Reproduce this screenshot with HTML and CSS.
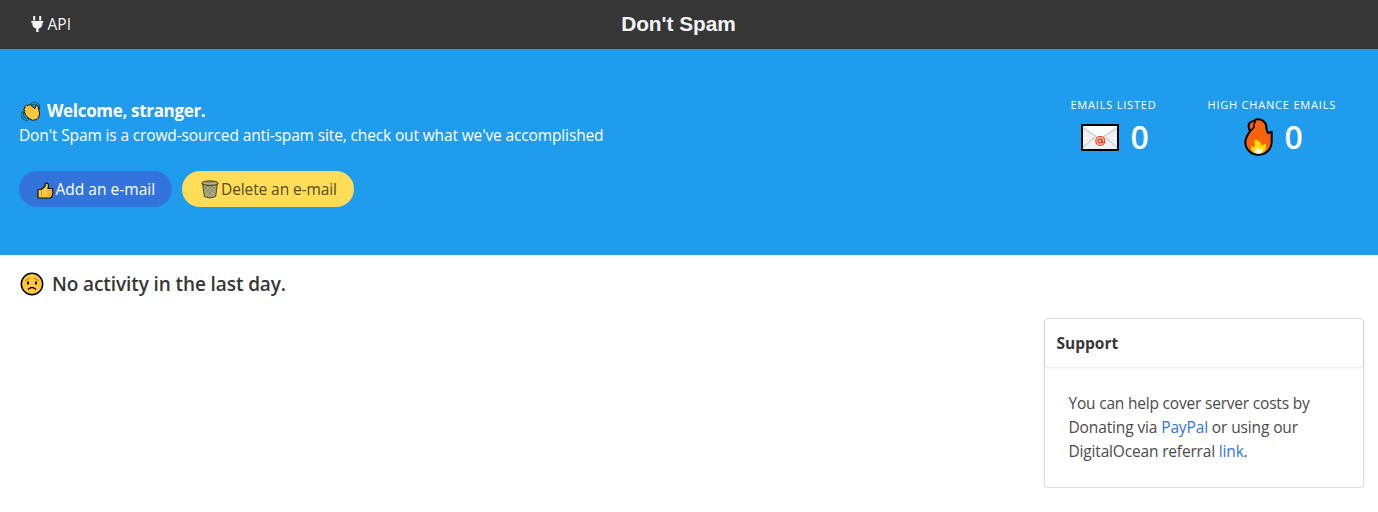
FILE: index.html
```html
<!DOCTYPE html>
<html lang="en">
<head>
<meta charset="utf-8">
<title>Don't Spam</title>
<link rel="stylesheet" href="styles.css">
</head>
<body>
  <nav class="navbar">
    <a class="navbar-item">
      <svg class="icon-plug" viewBox="0 0 13 16" fill="currentColor"><path d="M2.200 0h2v4.400h-2zM8.200 0h2v4.400h-2zM.3 5h12v1.700h-.9v1.600c0 2.200-1.500 3.700-3.800 4.200V16H5.200v-3.500C2.900 12 1.400 10.500 1.400 8.300V6.700H.3z"/></svg>
      <span class="api">API</span>
    </a>
    <h1 class="brand"><span>Don't Spam</span></h1>
  </nav>

  <section class="hero">
    <div class="intro">
      <h2 class="title">
        <svg class="icon-wave" viewBox="0 0 22 22" stroke-linejoin="round" stroke-linecap="round">
          <path d="M12 3Q13 .8 16 2.200Q20 3 19.500 7M2 12.500Q.8 15 2.500 17.500Q4 20 7.500 19.500" fill="none" stroke="#0b2a33" stroke-width="3"/>
          <path d="M12 3Q13 .8 16 2.200Q20 3 19.500 7M2 12.500Q.8 15 2.500 17.500Q4 20 7.500 19.500" fill="none" stroke="#26a7c6" stroke-width="1.500"/>
          <path d="M3 8.500L4.500 7.300L4 5.500L6 4.200L7.500 5L8.600 3.300L10.400 3.900L15.300 8L16.300 4.500L18.600 4.600L20.500 13.500Q20.500 18 16.500 20Q12.500 22 9 18.800L4.600 14.500L4.700 12.800L3.200 11.500L4 10Z" fill="#ffc83d" stroke="#111" stroke-width="1.100"/>
          <path d="M6.500 6.500L11 11M5 9.500L9.500 13.500M9 5L13 9.500" fill="none" stroke="#d69a2d" stroke-width=".6"/>
        </svg>
        <span class="title-text">Welcome, stranger.</span>
      </h2>
      <p class="subtitle"><span>Don't Spam is a crowd-sourced anti-spam site, check out what we've accomplished</span></p>
      <div class="buttons">
        <a class="button is-link">
          <svg class="icon-thumb" viewBox="0 0 17 17" stroke-linejoin="round">
            <path d="M1 7.500H4.300L8 4.200L8.300 1.600Q9.500 .4 11 1.800Q12 3.500 10.900 6.500H15Q16.200 7.200 15.700 8.500L16 10.500L15.500 12.600L14.700 15L13.500 16H1Z" fill="#ffc83d" stroke="#111" stroke-width="1.200"/>
            <path d="M10.500 8.700H15M10.500 11.200H15M10.500 13.600H14.500M4.500 8V15" stroke="#d18d1d" stroke-width=".8"/>
          </svg>
          <span class="add">Add an e-mail</span>
        </a>
        <a class="button is-warning">
          <svg class="icon-bin" viewBox="0 0 18 19">
            <path d="M1.500 3L3.400 16.500Q9 19.500 14.600 16.500L16.500 3Z" fill="#a9a984" stroke="#47431e" stroke-width="1"/>
            <path d="M3 6L12 17M6 5L15 14M10 5L15.500 10M15 6L6 17M12 5L3.500 14M8 5L3 10" stroke="#7d7b58" stroke-width=".6"/>
            <ellipse cx="9" cy="3.200" rx="8.200" ry="2.300" fill="#908f6d" stroke="#47431e"/>
            <path d="M2.500 3Q9 5 15.500 3" fill="none" stroke="#c4c49c" stroke-width=".9"/>
          </svg>
          <span class="delete">Delete an e-mail</span>
        </a>
      </div>
    </div>
    <div class="stats">
      <div class="stat">
        <p class="heading"><span class="listed">Emails listed</span></p>
        <p class="value">
          <svg class="icon-mail" viewBox="0 0 38 27">
            <path d="M1 1H37V26H1Z" fill="#f1f1f1" stroke="#000" stroke-width="2"/>
            <path d="M2 2L19 14.500L36 2Z" fill="#fff"/>
            <path d="M2 4L19 15L36 4M2 23.500L14 13M36 23.500L24 13" fill="none" stroke="#ccc" stroke-width="1.200"/>
            <circle cx="19.300" cy="17" r="4.500" fill="#f5cfc4" stroke="#f03a17" stroke-width="1.200"/>
            <circle cx="19" cy="17" r="1.900" fill="none" stroke="#f03a17" stroke-width="1.200"/>
            <path d="M21 14.800V17.500Q21.500 19.300 23.500 17.800" fill="none" stroke="#f03a17" stroke-width="1.200"/>
          </svg>
          <span>0</span>
        </p>
      </div>
      <div class="stat">
        <p class="heading"><span class="chance">High chance emails</span></p>
        <p class="value">
          <svg class="icon-fire" viewBox="0 0 29 38">
            <path d="M6 4.500Q8 3 10.500 3Q11 1 14.500 1.300C19 1.500 22.500 5 22.300 9C22.200 11.500 23 13 24 15L27.700 13.700V23C28 30.500 22.500 36.500 15 36.700C7 37 1.500 31 1.300 24.500C1.200 19.500 4 16.500 6.500 12.500Q4.500 11.500 4.600 8.500Q4.600 6 6 4.500Z" fill="#f7630c" stroke="#000" stroke-width="2" stroke-linejoin="round"/>
            <path d="M6.500 12.500Q10 10.500 10 8Q9.500 5.500 11.500 3.500" fill="none" stroke="#000" stroke-width="1.600"/>
            <path d="M11 21.500C16 22.500 17.500 26 18 28L21 25.500C23.500 30 21 35.500 15 35.700C9 36 6.500 32 7.200 28L10 29.500C11.500 27 10 24 11 21.500Z" fill="#ffde00"/>
            <path d="M13 29Q15 30.500 15.500 32L18 30.500Q19 34.500 15 35.700Q10 35.500 10.500 32L12.500 32.500Z" fill="#fff"/>
          </svg>
          <span>0</span>
        </p>
      </div>
    </div>
  </section>

  <main class="content">
    <h3 class="activity">
      <svg class="icon-sad" viewBox="0 0 24 24" fill="none" stroke-linecap="round">
        <circle cx="12" cy="12" r="10.700" fill="#ffc83d" stroke="#000" stroke-width="1.500"/>
        <ellipse cx="8" cy="11" rx="1.100" ry="1.700" fill="#000"/>
        <ellipse cx="16" cy="11" rx="1.100" ry="1.700" fill="#000"/>
        <path d="M5.500 8.300Q8 8 9.500 6.200M18.500 8.300Q16 8 14.500 6.200" stroke="#c28023" stroke-width="1.200"/>
        <path d="M8.500 17Q12 14 15.500 17" stroke="#000" stroke-width="1.500"/>
      </svg>
      <span class="activity-text">No activity in the last day.</span>
    </h3>
    <div class="card">
      <div class="card-header"><span>Support</span></div>
      <div class="card-content">
        <div class="line1">You can help cover server costs by</div>
        <div class="line2">Donating via <a>PayPal</a> or using our</div>
        <div class="line3">DigitalOcean referral <a>link</a>.</div>
      </div>
    </div>
  </main>
</body>
</html>
```
FILE: styles.css
```css
* {
  margin: 0;
  padding: 0;
  box-sizing: border-box;
}
body {
  font: 15.5px/24px "Open Sans", "Noto Sans", sans-serif;
  color: #4a4a4a;
  background: #fff;
}
svg {
  display: block;
  flex: none;
}
span, p, h1, h2, h3, .card-content div {
  white-space: nowrap;
}
.navbar {
  display: grid;
  grid-template-columns: 1fr auto 1fr;
  align-items: center;
  height: 49px;
  padding: 0 21px 2px 31px;
  background: #363636;
  color: #f5f5f5;
}
.navbar-item {
  display: flex;
  align-items: center;
  gap: 3.5px;
}
.icon-plug {
  width: 13px;
  height: 16px;
}
.brand {
  font: bold 20.8px/24px "Liberation Sans", Arial, sans-serif;
  margin-right: 31px;
}
.hero {
  display: flex;
  justify-content: space-between;
  height: 206px;
  padding: 48px 42px 0 19px;
  background: #209cee;
  color: #fff;
}
.title {
  display: flex;
  align-items: center;
  gap: 6px;
  height: 26px;
  padding-top: 2px;
  font-size: 17px;
  font-weight: 700;
  letter-spacing: -.32px;
}
.icon-wave {
  width: 20px;
  height: 21px;
  margin-left: 2px;
}
.subtitle {
  letter-spacing: -.135px;
}
.buttons {
  display: flex;
  gap: 10px;
  margin-top: 24px;
}
.button {
  display: flex;
  align-items: center;
  height: 36px;
  border-radius: 18px;
}
.is-link {
  width: 153px;
  padding-left: 17.5px;
  gap: 2px;
  background: #3273dc;
  color: #fff;
  letter-spacing: .02px;
}
.is-warning {
  width: 172px;
  padding-left: 19px;
  gap: 2px;
  background: #ffdd57;
  color: #564c23;
  letter-spacing: -.1px;
}
.icon-thumb {
  width: 17px;
  height: 17px;
  margin-top: 2px;
}
.icon-bin {
  width: 18px;
  height: 19px;
}
.stats {
  display: flex;
  gap: 51px;
  padding-top: 1px;
}
.heading {
  font-size: 11px;
  line-height: 14px;
  letter-spacing: .8px;
  text-transform: uppercase;
}
.value {
  display: flex;
  align-items: center;
  gap: 11px;
  height: 38px;
  margin-top: 6px;
  padding-left: 11px;
  font-size: 32px;
  font-weight: 600;
}
.icon-mail {
  width: 38px;
  height: 27px;
}
.icon-fire {
  width: 29px;
  height: 38px;
}
.stat + .stat .value {
  padding-left: 37px;
}
.content {
  padding: 17px 14px 0 20px;
}
.activity {
  display: flex;
  align-items: center;
  gap: 8px;
  height: 24px;
  color: #363636;
  font-size: 19px;
  font-weight: 600;
  letter-spacing: -.1px;
}
.icon-sad {
  width: 24px;
  height: 24px;
}
.card {
  width: 320px;
  height: 170px;
  margin: 22px 0 0 auto;
  border: 1px solid #dbdbdb;
  border-radius: 4px;
  box-shadow: 0 1px 2px rgba(10, 10, 10, .1);
}
.card-header {
  height: 48px;
  padding: 12px 11.5px;
  box-shadow: 0 1px 2px rgba(10, 10, 10, .1);
  color: #363636;
  font-weight: 700;
}
.card-content {
  padding: 24px 23.5px;
}
.card-content a {
  color: #3273dc;
}
.line1 {
  letter-spacing: -.2px;
}
.line2 {
  letter-spacing: -.13px;
}
.line3 {
  letter-spacing: -.17px;
}
```
